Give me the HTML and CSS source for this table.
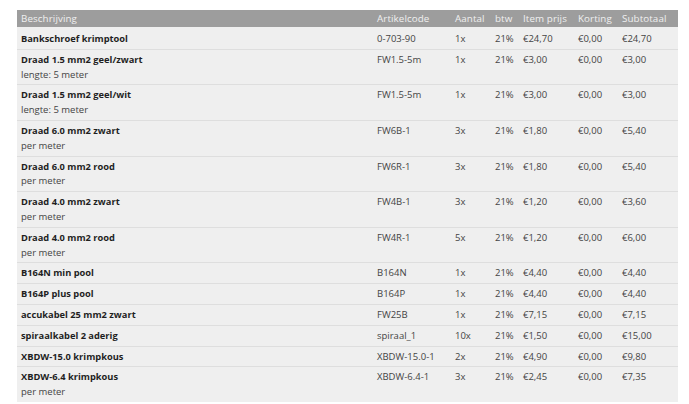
FILE: index.html
```html
<!DOCTYPE html>
<html>
<head>
<meta charset="utf-8">
<link rel="stylesheet" href="styles.css">
</head>
<body>
<table class="cart">
  <colgroup>
    <col class="c-desc"><col class="c-code"><col class="c-qty"><col class="c-vat"><col class="c-price"><col class="c-disc"><col class="c-sub">
  </colgroup>
  <thead>
    <tr><th>Beschrijving</th><th>Artikelcode</th><th>Aantal</th><th>btw</th><th>Item prijs</th><th>Korting</th><th>Subtotaal</th></tr>
  </thead>
  <tbody>
    <tr><td><span class="name">Bankschroef krimptool</span></td><td>0-703-90</td><td>1x</td><td>21%</td><td>€24,70</td><td>€0,00</td><td>€24,70</td></tr>
    <tr><td><span class="name">Draad 1.5 mm2 geel/zwart</span><span class="note">lengte: 5 meter</span></td><td>FW1.5-5m</td><td>1x</td><td>21%</td><td>€3,00</td><td>€0,00</td><td>€3,00</td></tr>
    <tr><td><span class="name">Draad 1.5 mm2 geel/wit</span><span class="note">lengte: 5 meter</span></td><td>FW1.5-5m</td><td>1x</td><td>21%</td><td>€3,00</td><td>€0,00</td><td>€3,00</td></tr>
    <tr><td><span class="name">Draad 6.0 mm2 zwart</span><span class="note">per meter</span></td><td>FW6B-1</td><td>3x</td><td>21%</td><td>€1,80</td><td>€0,00</td><td>€5,40</td></tr>
    <tr><td><span class="name">Draad 6.0 mm2 rood</span><span class="note">per meter</span></td><td>FW6R-1</td><td>3x</td><td>21%</td><td>€1,80</td><td>€0,00</td><td>€5,40</td></tr>
    <tr><td><span class="name">Draad 4.0 mm2 zwart</span><span class="note">per meter</span></td><td>FW4B-1</td><td>3x</td><td>21%</td><td>€1,20</td><td>€0,00</td><td>€3,60</td></tr>
    <tr><td><span class="name">Draad 4.0 mm2 rood</span><span class="note">per meter</span></td><td>FW4R-1</td><td>5x</td><td>21%</td><td>€1,20</td><td>€0,00</td><td>€6,00</td></tr>
    <tr><td><span class="name">B164N min pool</span></td><td>B164N</td><td>1x</td><td>21%</td><td>€4,40</td><td>€0,00</td><td>€4,40</td></tr>
    <tr><td><span class="name">B164P plus pool</span></td><td>B164P</td><td>1x</td><td>21%</td><td>€4,40</td><td>€0,00</td><td>€4,40</td></tr>
    <tr><td><span class="name">accukabel 25 mm2 zwart</span></td><td>FW25B</td><td>1x</td><td>21%</td><td>€7,15</td><td>€0,00</td><td>€7,15</td></tr>
    <tr><td><span class="name">spiraalkabel 2 aderig</span></td><td>spiraal_1</td><td>10x</td><td>21%</td><td>€1,50</td><td>€0,00</td><td>€15,00</td></tr>
    <tr><td><span class="name">XBDW-15.0 krimpkous</span></td><td>XBDW-15.0-1</td><td>2x</td><td>21%</td><td>€4,90</td><td>€0,00</td><td>€9,80</td></tr>
    <tr><td><span class="name">XBDW-6.4 krimpkous</span><span class="note">per meter</span></td><td>XBDW-6.4-1</td><td>3x</td><td>21%</td><td>€2,45</td><td>€0,00</td><td>€7,35</td></tr>
  </tbody>
</table>
</body>
</html>
```

FILE: styles.css
```css
html, body {
  margin: 0;
  background: #ffffff;
}
body {
  padding: 10px 11px 0 17px;
  font-family: "Open Sans", Lato, sans-serif;
  font-size: 9.5px;
  color: #3a3a3a;
}
.cart {
  width: 661px;
  border-collapse: collapse;
  table-layout: fixed;
}
.c-desc { width: 356px; }
.c-code { width: 78px; }
.c-qty { width: 40px; }
.c-vat { width: 28px; }
.c-price { width: 55px; }
.c-disc { width: 44px; }
.c-sub { width: 60px; }
.cart th {
  background: #9d9d9d;
  color: #f0f0f0;
  font-weight: 400;
  font-size: 9.8px;
  letter-spacing: 0.1px;
  text-align: left;
  height: 17px;
  padding: 0 4px;
  line-height: 17px;
  white-space: nowrap;
}
.cart td {
  background: #efefef;
  border-top: 1px solid #dedede;
  padding: 3px 4px 2px;
  line-height: 14.8px;
  vertical-align: top;
  white-space: nowrap;
  color: #444;
}
.cart tbody tr:first-child td {
  border-top: 0;
  padding-top: 5px;
}
.name {
  display: block;
  font-weight: 700;
  font-size: 9.3px;
  color: #1f1f1f;
}
.note {
  display: block;
  color: #444;
}
```
